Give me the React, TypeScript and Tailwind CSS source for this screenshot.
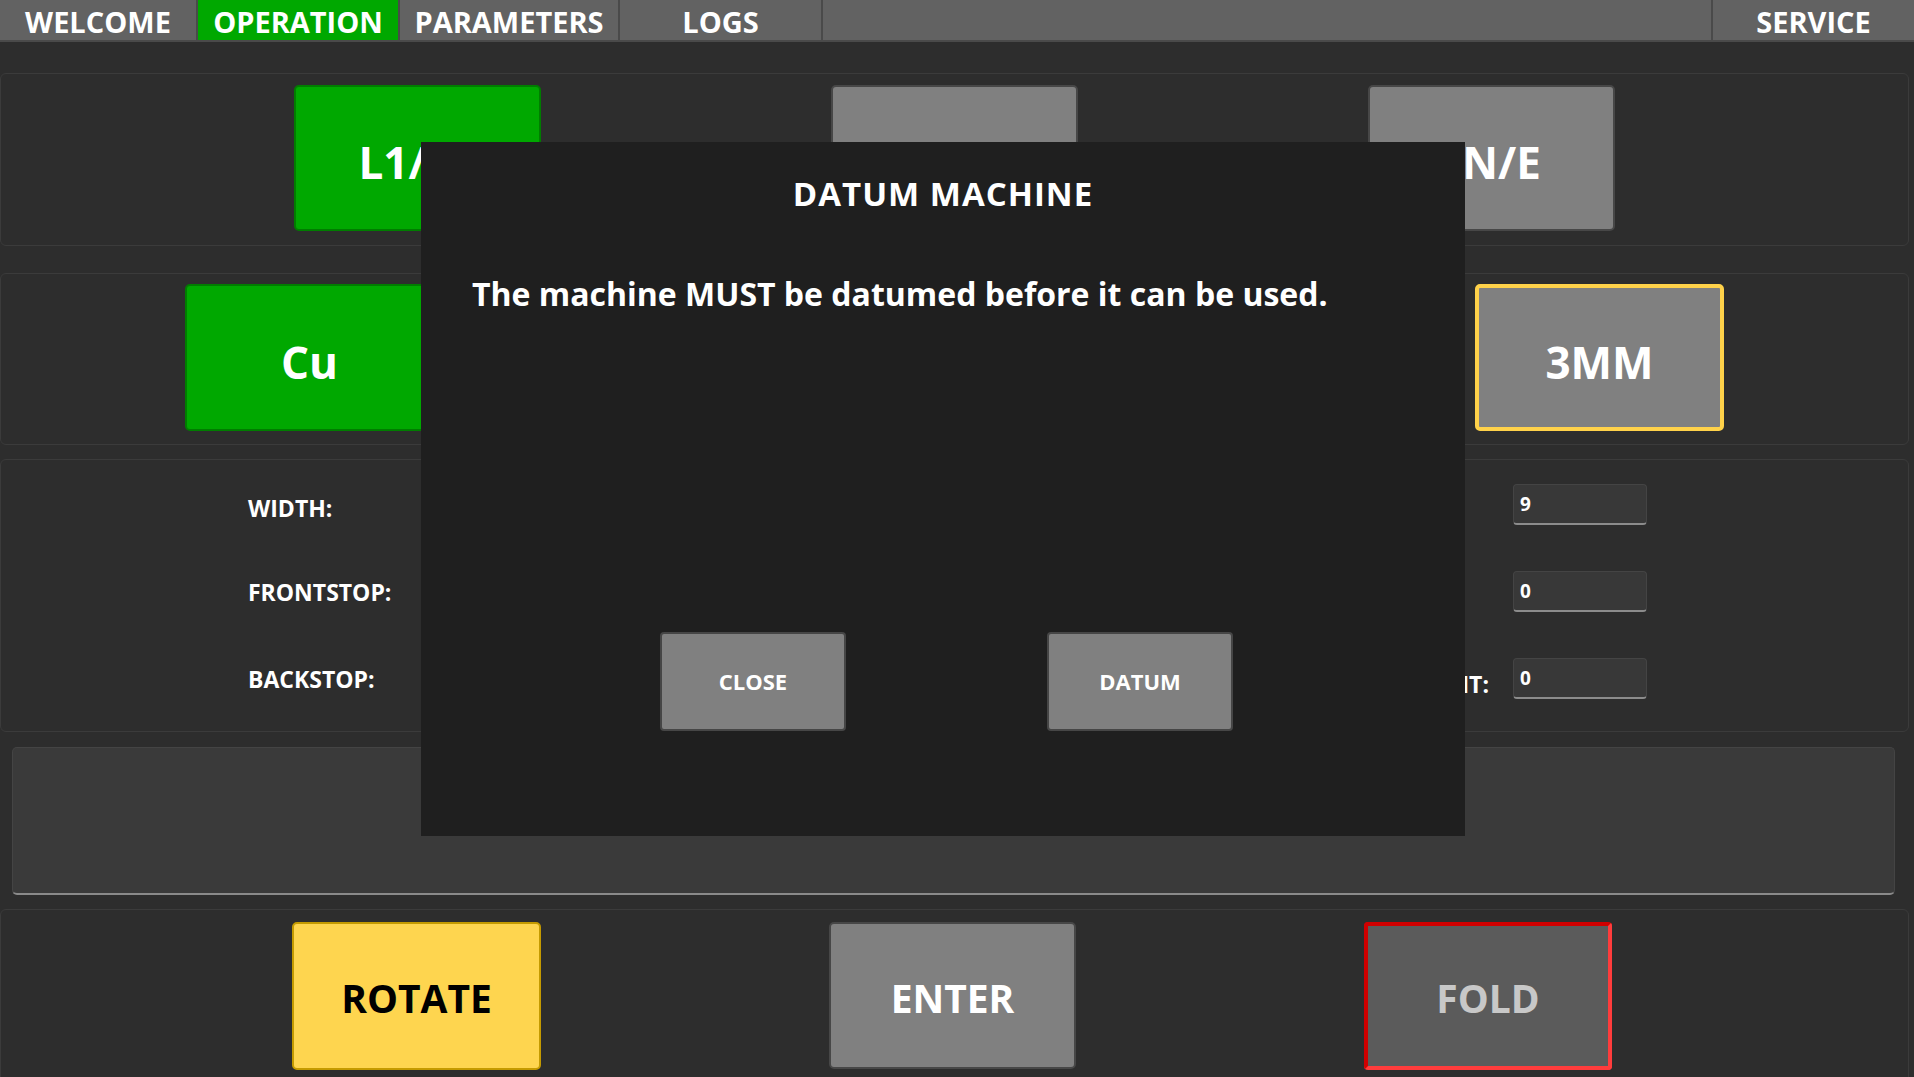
import React from 'react';

type Tab = { label: string; width: string; active?: boolean };

const tabs: Tab[] = [
  { label: 'WELCOME', width: 'w-[198px]' },
  { label: 'OPERATION', width: 'w-[202px]', active: true },
  { label: 'PARAMETERS', width: 'w-[220px]' },
  { label: 'LOGS', width: 'w-[203px]' },
];

const TabBar: React.FC = () => (
  <div className="flex h-[42px] bg-[#626262] border-b-2 border-[#4a4a4a]">
    {tabs.map((t) => (
      <div
        key={t.label}
        className={`${t.width} flex items-center justify-center pt-[3px] border-r-2 border-[#4a4a4a] text-[29px] font-bold text-white ${
          t.active ? 'bg-[#00a800]' : ''
        }`}
      >
        {t.label}
      </div>
    ))}
    <div className="flex-1 border-r-2 border-[#4a4a4a]" />
    <div className="w-[201px] flex items-center justify-center pt-[3px] text-[29px] font-bold text-white">SERVICE</div>
  </div>
);

const Panel: React.FC<{ className?: string; children?: React.ReactNode }> = ({ className = '', children }) => (
  <div className={`w-[1909px] rounded-[6px] border border-[#3b3b3b] bg-[#2d2d2d] ${className}`}>{children}</div>
);

const GreenBtn: React.FC<{ label?: string; w: string }> = ({ label, w }) => (
  <div className={`${w} h-full flex items-center justify-center pt-[8px] rounded-[5px] border-2 border-[#007d00] bg-[#00a800] text-[44px] font-bold text-white`}>
    {label}
  </div>
);

const GrayBtn: React.FC<{ label?: string; w: string; className?: string }> = ({ label, w, className = '' }) => (
  <div className={`${w} h-full flex items-center justify-center pt-[8px] rounded-[5px] border-2 border-[#474747] bg-[#808080] text-[44px] font-bold text-white ${className}`}>
    {label}
  </div>
);

const Field: React.FC<{ value?: string }> = ({ value }) => (
  <div className="w-[134px] h-[41px] flex items-center pl-[6px] rounded-[4px] border border-[#444] border-b-2 border-b-[#8c8c8c] bg-[#383838] text-[19px] font-bold text-white">
    {value}
  </div>
);

const Label: React.FC<{ text: string; pad: string }> = ({ text, pad }) => (
  <div className={`h-[41px] flex items-center ${pad} text-[23px] font-bold text-white`}>{text}</div>
);

const DatumDialog: React.FC = () => (
  <div className="absolute left-[421px] top-[142px] w-[1044px] h-[694px] bg-[#1f1f1f] flex flex-col">
    <div className="pt-[27px] text-center text-[33px] tracking-[1px] font-bold text-white">DATUM MACHINE</div>
    <div className="pl-[51px] pt-[51px] text-[32px] font-bold text-white">
      The machine MUST be datumed before it can be used.
    </div>
    <div className="flex pl-[239px] gap-[201px] mt-[314px]">
      <div className="w-[186px] h-[99px] flex items-center justify-center rounded-[4px] border-2 border-[#464646] bg-[#808080] text-[22px] font-bold text-white">
        CLOSE
      </div>
      <div className="w-[186px] h-[99px] flex items-center justify-center rounded-[4px] border-2 border-[#464646] bg-[#808080] text-[22px] font-bold text-white">
        DATUM
      </div>
    </div>
  </div>
);

export default function App() {
  return (
    <div className="relative w-[1914px] h-[1077px] overflow-hidden bg-[#2d2d2d] font-['Open_Sans','Noto_Sans',sans-serif]">
      <TabBar />

      <div className="flex flex-col">
        {/* phase selection */}
        <Panel className="mt-[31px] h-[173px] flex justify-center gap-[290px] pt-[11px] pb-[14px]">
          <GreenBtn label="L1/L2" w="w-[247px]" />
          <GrayBtn w="w-[247px]" />
          <GrayBtn label="N/E" w="w-[247px]" className="pl-[20px]" />
        </Panel>

        {/* material and thickness */}
        <Panel className="mt-[27px] h-[172px] flex justify-center gap-[181px] pt-[10px] pb-[13px]">
          <GreenBtn label="Cu" w="w-[249px]" />
          <GrayBtn w="w-[249px]" />
          <GrayBtn w="w-[249px]" />
          <div className="w-[249px] h-full flex items-center justify-center pt-[8px] rounded-[5px] border-[4px] border-[#ffd24a] bg-[#808080] text-[44px] font-bold text-white">
            3MM
          </div>
        </Panel>

        {/* dimensions */}
        <Panel className="mt-[14px] h-[273px] flex pt-[24px]">
          <div className="w-[957px] flex pl-[247px]">
            <div className="w-[308px] flex flex-col gap-[46px]">
              <Label text="WIDTH:" pad="pt-[8px]" />
              <Label text="FRONTSTOP:" pad="pt-[1px]" />
              <Label text="BACKSTOP:" pad="pt-[1px]" />
            </div>
            <div className="flex flex-col gap-[46px]">
              <Field />
              <Field />
              <Field />
            </div>
          </div>
          <div className="flex">
            <div className="w-[555px] flex flex-col gap-[46px] items-end pr-[24px]">
              <Label text="" pad="" />
              <Label text="" pad="" />
              <Label text="AMOUNT:" pad="pt-[12px]" />
            </div>
            <div className="flex flex-col gap-[46px]">
              <Field value="9" />
              <Field value="0" />
              <Field value="0" />
            </div>
          </div>
        </Panel>

        {/* message area */}
        <div className="mt-[15px] ml-[12px] w-[1883px] h-[148px] rounded-[5px] border border-[#444] border-b-2 border-b-[#8a8a8a] bg-[#3a3a3a]" />

        {/* actions */}
        <Panel className="mt-[14px] h-[200px] flex gap-[288px] pl-[291px] pt-[12px]">
          <div className="w-[249px] h-[148px] flex items-center justify-center pt-[5px] rounded-[5px] border-2 border-[#c49a00] bg-[#fed54f] text-[39px] font-bold text-black">
            ROTATE
          </div>
          <div className="w-[247px] h-[147px] flex items-center justify-center pt-[5px] rounded-[5px] border-2 border-[#474747] bg-[#808080] text-[39px] font-bold text-white">
            ENTER
          </div>
          <div className="w-[248px] h-[148px] flex items-center justify-center pt-[5px] rounded-[4px] border-[4px] border-[#ff3c3c] border-t-[#d00000] border-l-[#d00000] bg-[#5b5b5b] text-[39px] font-bold text-[#c8c8c8]">
            FOLD
          </div>
        </Panel>
      </div>

      <DatumDialog />
    </div>
  );
}
